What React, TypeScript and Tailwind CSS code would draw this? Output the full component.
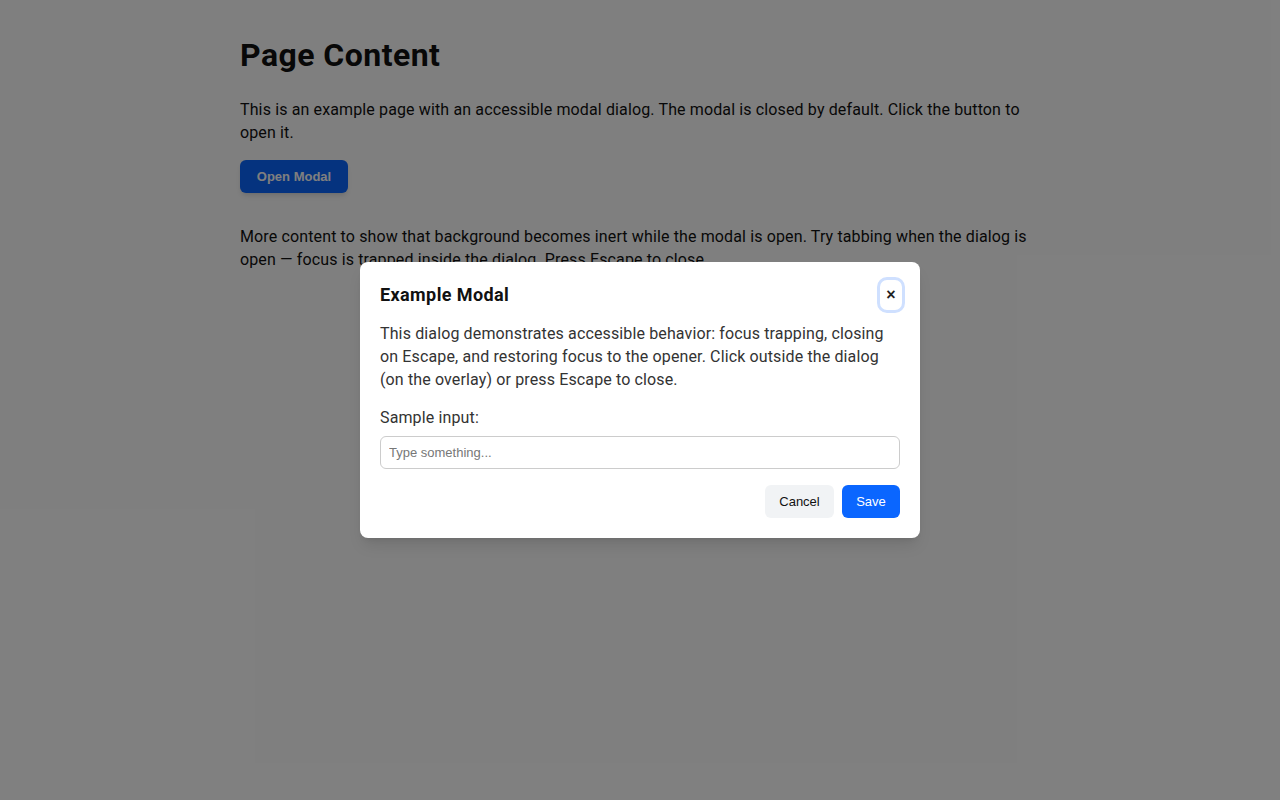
import React from "react";

export default function App() {
  return (
    <div className="relative min-h-[800px] w-full bg-white tracking-[0.13px]" style={{ fontFamily: "Roboto, 'Noto Sans', sans-serif" }}>
      <div className="mx-auto w-[800px] pt-[35px] text-[#111]">
        <h1 className="text-[32px] leading-[40px] font-bold tracking-[0.45px]">Page Content</h1>
        <p className="mt-[23px] text-[16px] leading-[23px] text-[#111]">
          This is an example page with an accessible modal dialog. The modal is closed by default. Click the button to open it.
        </p>
        <button
          className="mt-[16px] h-[33px] w-[108px] rounded-[6px] bg-[#0a66ff] text-[13px] font-bold tracking-normal text-white shadow-md"
          style={{ fontFamily: "'Liberation Sans', Arial, sans-serif" }}
        >
          Open Modal
        </button>
        <p className="mt-[32px] text-[16px] leading-[23px] text-[#111]">
          More content to show that background becomes inert while the modal is open. Try tabbing when the dialog is open — focus is trapped inside the dialog. Press Escape to close.
        </p>
      </div>

      <div className="absolute inset-0 bg-black/50">
        <div className="absolute left-[360px] top-[262px] w-[560px] rounded-[8px] bg-white px-[20px] pt-[18px] pb-[20px] shadow-lg">
          <div className="flex items-center justify-between">
            <h2 className="text-[18px] leading-[28px] font-bold tracking-[0.4px] text-[#111]">Example Modal</h2>
            <button
              className="mr-[-2px] flex h-[30px] w-[22px] items-center justify-center rounded-[7px] text-[16px] font-bold tracking-normal text-[#222] outline outline-[3px] outline-[#cfe0ff]"
              style={{ fontFamily: "'Liberation Sans', Arial, sans-serif" }}
            >
              ×
            </button>
          </div>
          <p className="mt-[12px] text-[16px] leading-[23px] text-[#333]">
            This dialog demonstrates accessible behavior: focus trapping, closing on Escape, and restoring focus to the opener. Click outside the dialog (on the overlay) or press Escape to close.
          </p>
          <label className="mt-[15px] block text-[16px] leading-[23px] text-[#333]">Sample input:</label>
          <input
            placeholder="Type something..."
            className="mt-[7px] block h-[33px] w-full rounded-[6px] border border-[#ccc] px-[8px] text-[13px] tracking-normal text-[#222] placeholder:text-[#777] outline-none"
            style={{ fontFamily: "'Liberation Sans', Arial, sans-serif" }}
          />
          <div className="mt-[16px] flex justify-end gap-[8px] tracking-normal" style={{ fontFamily: "'Liberation Sans', Arial, sans-serif" }}>
            <button className="h-[33px] w-[69px] rounded-[6px] bg-[#f1f3f5] text-[13px] text-[#111]">Cancel</button>
            <button className="h-[33px] w-[58px] rounded-[6px] bg-[#0a66ff] text-[13px] text-white">Save</button>
          </div>
        </div>
      </div>
    </div>
  );
}
